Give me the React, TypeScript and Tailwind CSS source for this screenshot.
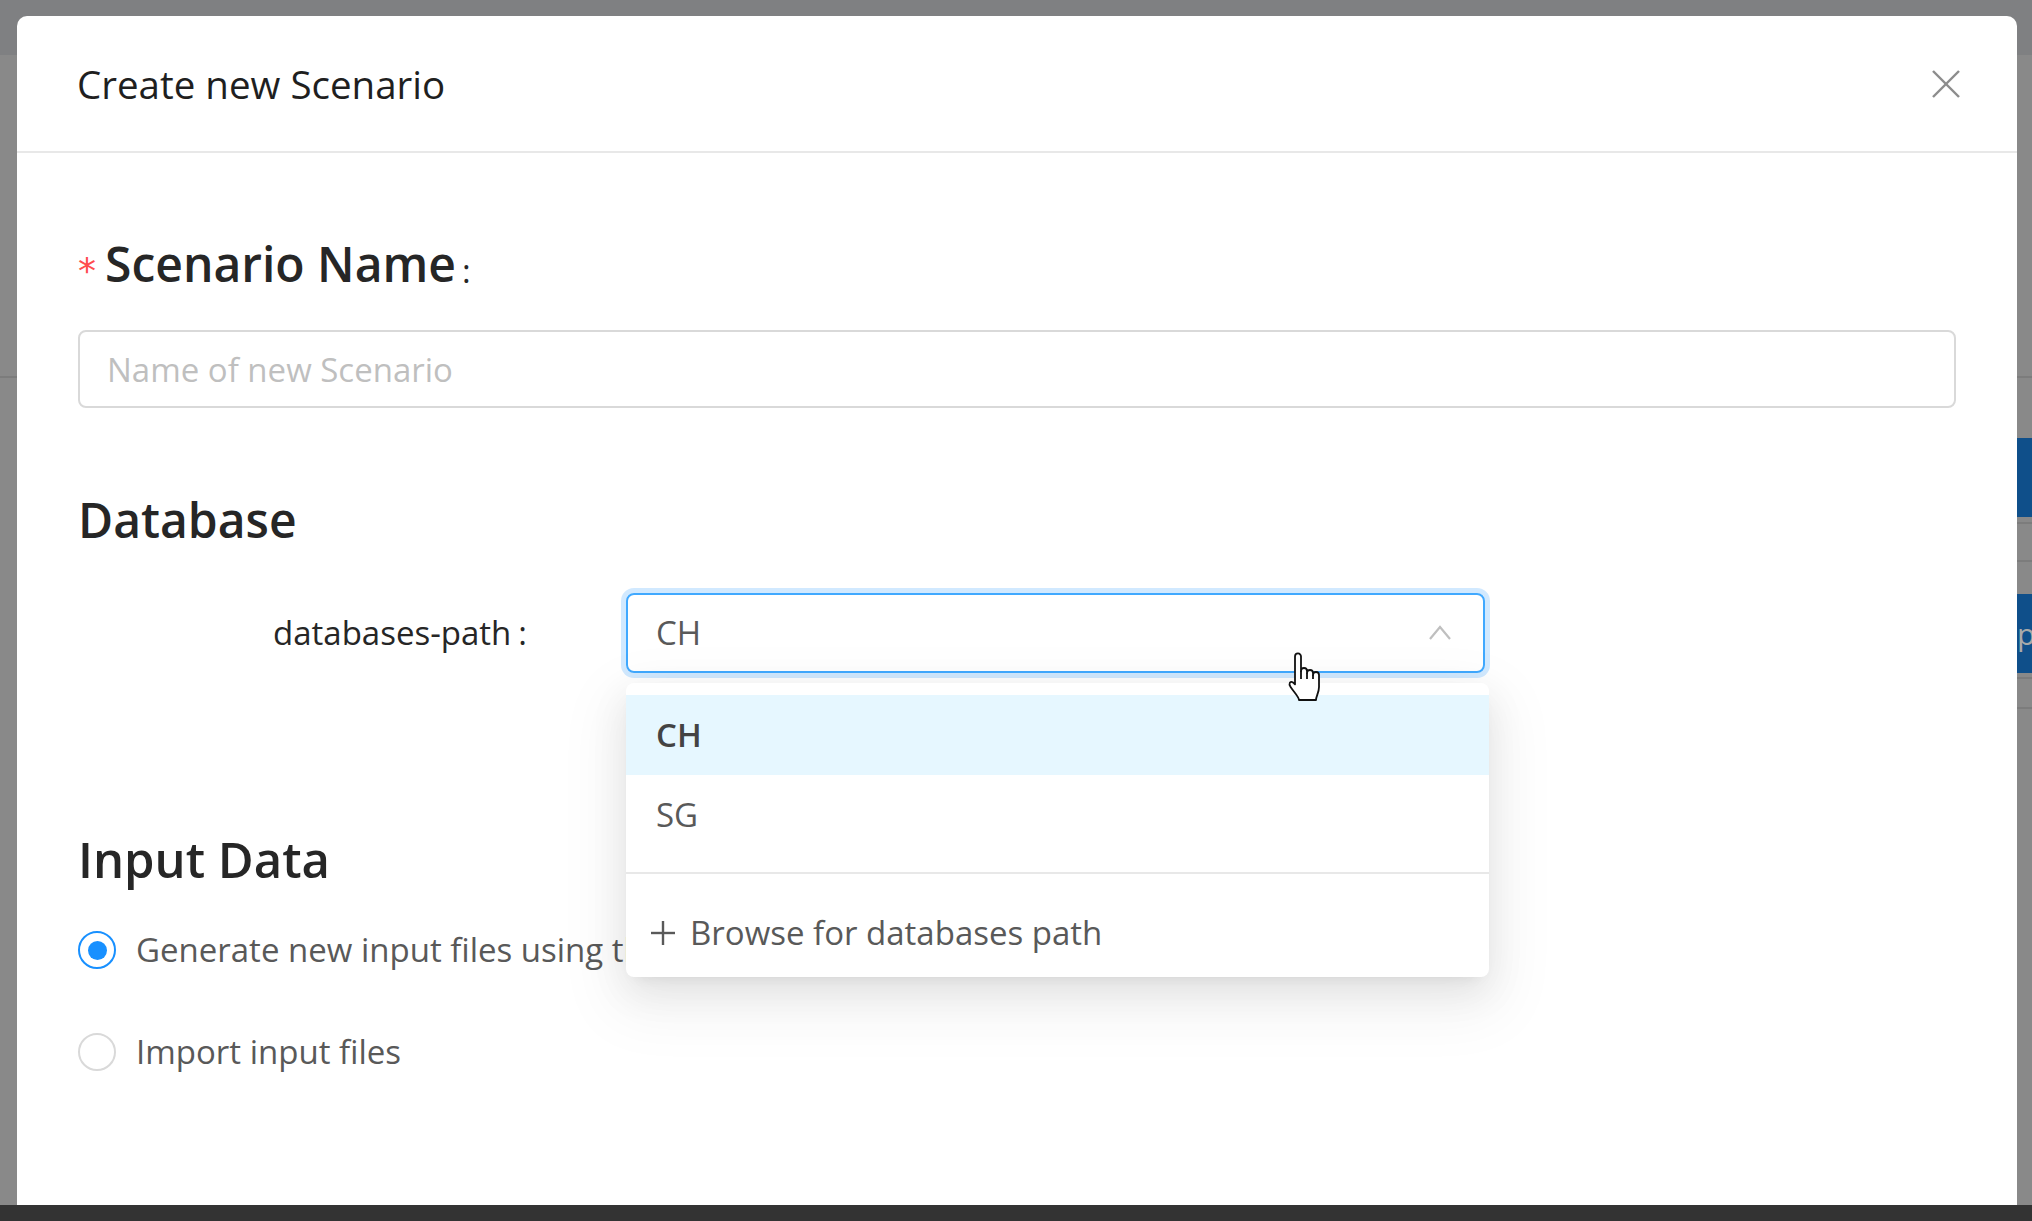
import React from "react";

function CloseIcon() {
  return (
    <svg width="32" height="32" viewBox="0 0 32 32" fill="none" stroke="#8c8c8c" strokeWidth="2.4">
      <line x1="3" y1="3" x2="29" y2="29" />
      <line x1="29" y1="3" x2="3" y2="29" />
    </svg>
  );
}

function ChevronUp() {
  return (
    <svg width="24" height="16" viewBox="0 0 24 16" fill="none" stroke="#bfbfbf" strokeWidth="2.2">
      <polyline points="2,14 12,2 22,14" />
    </svg>
  );
}

function PlusIcon() {
  return (
    <svg width="26" height="26" viewBox="0 0 26 26" fill="none" stroke="#595959" strokeWidth="2.4">
      <line x1="13" y1="1" x2="13" y2="25" />
      <line x1="1" y1="13" x2="25" y2="13" />
    </svg>
  );
}

function HandCursor() {
  return (
    <svg width="34" height="50" viewBox="0 0 17 25" fill="#fff" stroke="#111" strokeWidth="0.9" strokeLinejoin="round">
      <path d="M4 2.2 A1.5 1.5 0 0 1 7 2.2 V9.5 A1.5 1.5 0 0 1 10 9.5 V10.5 A1.5 1.5 0 0 1 13 10.5 V11.5 A1.5 1.5 0 0 1 16 11.5 V17.5 C16 20.5 14.5 22 14.5 24 H6 C6 22.5 3.5 20 1.8 17.5 C0.6 15.8 1.6 14.2 3 15.2 L4 16.2 Z" />
      <path d="M7 9.5 V13.5 M10 10.5 V13.5 M13 11.5 V13.5" fill="none" />
    </svg>
  );
}

function Radio({ checked, label }: { checked: boolean; label: string }) {
  return (
    <label className="flex h-[40px] items-center gap-[20px]">
      <span
        className={`flex h-[38px] w-[38px] items-center justify-center rounded-full border-2 bg-white ${
          checked ? "border-[#1890ff]" : "border-[#d9d9d9]"
        }`}
      >
        {checked && <span className="h-[19px] w-[19px] rounded-full bg-[#1890ff]" />}
      </span>
      <span className="whitespace-nowrap text-[33px] leading-[46px] text-[#595959]">{label}</span>
    </label>
  );
}

export default function App() {
  return (
    <div className="flex h-[1221px] w-[2032px] flex-col overflow-hidden font-['Open_Sans',sans-serif]">
      <div className="relative flex-1 overflow-hidden bg-[#898989]">
        {/* app behind the mask */}
        <div className="h-[55px] bg-[#7f8082]" />
        <div className="h-[321px]" />
        <div className="h-[2px] bg-[#7c7c7c]" />
        <div className="ml-auto flex w-[500px] flex-col">
          <div className="h-[60px]" />
          <div className="h-[79px] bg-[#0f4f8a]" />
          <div className="h-[5px]" />
          <div className="h-[2px] bg-[#7c7c7c]" />
          <div className="h-[36px]" />
          <div className="h-[2px] bg-[#7c7c7c]" />
          <div className="h-[32px]" />
          <div className="flex h-[79px] items-center justify-end overflow-hidden bg-[#0f4f8a] text-[30px] text-[#a9a9a9]">
            <span className="w-[15px] overflow-hidden leading-[40px]">p</span>
          </div>
          <div className="h-[4px]" />
          <div className="h-[2px] bg-[#7c7c7c]" />
          <div className="h-[28px]" />
          <div className="h-[2px] bg-[#7c7c7c]" />
        </div>

        {/* modal */}
        <div className="absolute bottom-0 left-[17px] right-[15px] top-[16px] rounded-t-[10px] bg-white">
          <div className="flex h-[137px] items-center justify-between border-b-2 border-[#e8e8e8] pl-[60px] pr-[55px]">
            <span className="text-[38.5px] leading-[52px] text-[#1f1f1f]">Create new Scenario</span>
            <CloseIcon />
          </div>

          <div className="px-[61px]">
            <div className="mt-[79px] flex h-[64px] items-center">
              <span className="mr-[9px] mt-[14px] font-['DejaVu_Sans'] text-[36px] leading-none text-[#ff4d4f]">*</span>
              <span className="text-[48px] font-semibold leading-[64px] text-[#262626]">Scenario Name</span>
              <span className="ml-[6px] mt-[12px] text-[33px] leading-none text-[#262626]">:</span>
            </div>

            <input
              readOnly
              placeholder="Name of new Scenario"
              className="mt-[34px] h-[78px] w-full rounded-[8px] border-2 border-[#d9d9d9] px-[27px] text-[33px] text-[#262626] outline-none placeholder:text-[#bfbfbf]"
            />

            <div className="mt-[80px] h-[64px] text-[48px] font-semibold leading-[64px] text-[#262626]">Database</div>

            <div className="mt-[41px] flex h-[80px] items-center">
              <div className="w-[449px] text-right text-[33px] leading-[46px] text-[#262626]">
                databases-path<span className="ml-[7px]">:</span>
              </div>
              <div className="relative ml-[99px] w-[859px]">
                <div className="flex h-[80px] items-center justify-between rounded-[8px] border-2 border-[#40a9ff] pl-[28px] pr-[31px] shadow-[0_0_0_5px_rgba(24,144,255,0.2)]">
                  <span className="text-[33px] leading-[46px] text-[#595959]">CH</span>
                  <ChevronUp />
                </div>

                <div className="absolute left-0 top-[90px] z-10 w-[863px] rounded-[8px] bg-white pt-[12px] shadow-[0_14px_38px_0_rgba(0,0,0,0.08),0_7px_14px_-10px_rgba(0,0,0,0.12),0_22px_60px_16px_rgba(0,0,0,0.05)]">
                  <div className="pb-[17px]">
                    <div className="flex h-[80px] items-center bg-[#e6f7ff] px-[30px] text-[33px] font-semibold text-[#434343]">CH</div>
                    <div className="flex h-[80px] items-center px-[30px] text-[33px] text-[#595959]">SG</div>
                  </div>
                  <div className="h-[2px] bg-[#e8e8e8]" />
                  <div className="flex items-center gap-[14px] pb-[21px] pl-[24px] pt-[36px]">
                    <PlusIcon />
                    <span className="text-[33px] leading-[46px] text-[#595959]">Browse for databases path</span>
                  </div>
                </div>
              </div>
            </div>

            <div className="mt-[154px] h-[64px] text-[49px] font-semibold leading-[64px] text-[#262626]">Input Data</div>

            <div className="mt-[39px] flex flex-col gap-[62px]">
              <Radio checked label="Generate new input files using the databases" />
              <Radio checked={false} label="Import input files" />
            </div>
          </div>
        </div>

        <div className="absolute left-[1287px] top-[652px] z-20">
          <HandCursor />
        </div>
      </div>
      <div className="h-[16px] bg-[#333333]" />
    </div>
  );
}
